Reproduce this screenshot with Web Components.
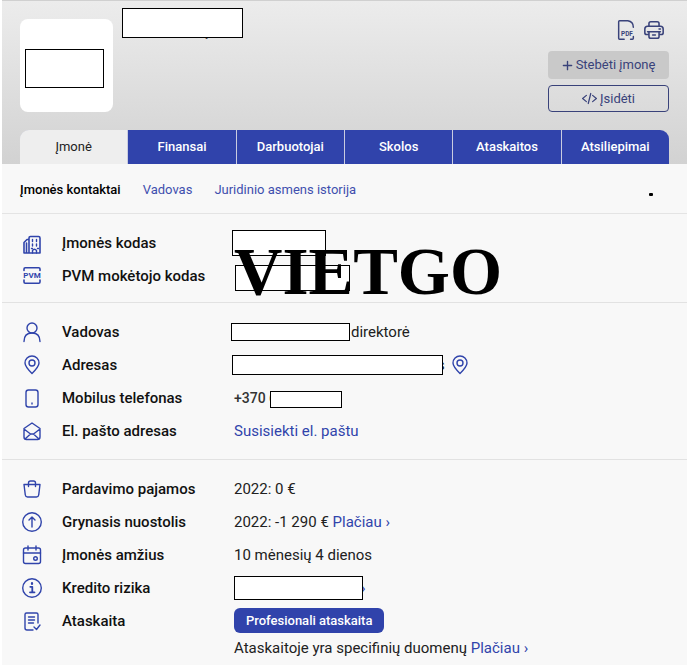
<!DOCTYPE html>
<html lang="lt">
<head>
<meta charset="utf-8">
<meta name="viewport" content="width=device-width, initial-scale=1">
<title>Įmonės kontaktai</title>
<style>
  html { background: #fff; }
  body { margin: 0 13px 0 2px; font-family: Roboto, "Liberation Sans", sans-serif; font-size: 15px; line-height: 20px; color: #212121; }
</style>
</head>
<body>
<company-page></company-page>
<script>
const ICONS = {
  pdf: `<path d="M10 22H5q-1 0-1-1V3q0-1 1-1h9q6 1 6 7M20 19v2q0 1-1 1h-2" stroke-width="1.600"/><text x="13" y="18" font-size="7" font-weight="700" text-anchor="middle" fill="currentColor" stroke="none">PDF</text>`,
  print: `<path d="M6.500 8V5q0-2 2-2h7q2 0 2 2v3M6.500 17H4q-2 0-2-2v-4q0-3 3-3h14q3 0 3 3v4q0 2-2 2h-2.500M5 14h14M6.500 14v5q0 2 2 2h7q2 0 2-2v-5M10.500 17.500h3M17.500 11h1.500" stroke-width="1.700"/>`,
  company: `<path d="M9 22V7q0-1.500 1.500-1.500h8q1.500 0 1.500 1.500v15H4V11.500L7 8.500h2M6.500 12v10" stroke-width="1.600"/><path d="M12.500 8.500v2M16.500 8.500v2M12.500 13v2M16.500 13v2M12.500 22v-2.500q2-2.500 4 0V22M11.500 17.500h1M17.500 17.500h1"/>`,
  vat: `<path d="M4 6.500V5q0-1.200 1.200-1.200h13.600Q20 3.800 20 5v1.500M4 16v2q0 1.200 1.200 1.200h13.600Q20 19.200 20 18v-2" stroke-width="1.600"/><text x="12" y="14" font-size="8" font-weight="700" text-anchor="middle" fill="currentColor" stroke="none">PVM</text>`,
  person: `<circle cx="12" cy="8" r="5"/><path d="M4 21.500q0-8.500 8-8.500t8 8.500"/>`,
  pin: `<path d="M12 20.500C8 16.500 5 13.500 5 10a7 7 0 0 1 14 0C19 13.500 16 16.500 12 20.500z"/><circle cx="12" cy="10" r="3"/>`,
  phone: `<rect x="6" y="4" width="12" height="17" rx="2.500"/><path d="M12 17v1"/>`,
  mail: `<path d="M4 9.500L12 4l8 5.500V18q0 2.500-2.500 2.500h-11Q4 20.500 4 18zM4 10l6.500 5h3L20 10M5 20l5.500-5M19 20l-5.500-5"/>`,
  bag: `<path d="M4 7.500h16l-1.300 10.500q-.3 2-2.300 2H7.600q-2 0-2.300-2zM8.500 9.500V6q0-2 2-2h3q2 0 2 2v3.500"/>`,
  up: `<circle cx="12" cy="12" r="9.300"/><path d="M12 17V7M9 10l3-3 3 3"/>`,
  calendar: `<rect x="3.500" y="5" width="17" height="15.500" rx="2"/><path d="M3.500 10h17M8 3v4M16 3v4"/><circle cx="15.500" cy="15.500" r="1.800"/>`,
  info: `<circle cx="12" cy="12" r="9.300"/><path d="M10.300 10.800h2V16M10 16.300h4.500" stroke-width="1.800"/><path d="M12 7v1" stroke-width="2.200"/>`,
  report: `<path d="M13 21H7q-2 0-2-2V5.500Q5 4 6.500 4h10Q18 4 18 5.500V14M8.500 8h6M8.500 11h6M8.500 14h5M14 18l2.500 2.500L20 16"/>`,
  plus: `<path d="M12 3v18M3 12h18" stroke-width="3"/>`,
  code: `<path d="M7 7l-6 5 6 5M17 7l6 5-6 5M14 4l-4 16" stroke-width="2"/>`
};

function define(name, html, setup) {
  const template = document.createElement('template');
  template.innerHTML = html;
  customElements.define(name, class extends HTMLElement {
    constructor() {
      super();
      this.attachShadow({ mode: 'open' }).append(template.content.cloneNode(true));
    }
    connectedCallback() { if (setup) setup(this, this.shadowRoot); }
  });
}

define('ui-icon', `<style>
  :host { display: inline-flex; flex: none; width: var(--icon-size, 24px); height: var(--icon-size, 24px); color: var(--icon-color, #3044ab); }
  svg { width: 100%; height: 100%; fill: none; stroke: currentColor; stroke-width: 1.400; stroke-linecap: round; stroke-linejoin: round; font-family: Roboto, sans-serif; }
</style><svg viewBox="0 0 24 24" aria-hidden="true"></svg>`,
(el, root) => { root.querySelector('svg').innerHTML = ICONS[el.getAttribute('name')]; });

define('blank-box', `<style>
  :host { display: block; flex: none; box-sizing: border-box; width: var(--w); height: var(--h); background: #fff; border: 1px solid #000; z-index: 1; }
</style>`);

define('company-header', `<style>
  :host { display: block; border-top: 1px solid #d0d0d0; background: linear-gradient(#ececec, #d2d2d2); padding: 0 18px; }
  .top { display: flex; height: 129px; align-items: flex-start; }
  .logo { display: flex; box-sizing: border-box; width: 93px; height: 93px; margin-top: 18px; padding: 30px 5px; background: #fff; border-radius: 8px; }
  .name { display: flex; margin: 7px 0 0 9px; }
  .tail { color: #111; font-size: 22px; line-height: 30px; font-weight: 500; margin-left: -38px; margin-top: 6px; }
  .actions { margin-left: auto; padding-top: 18px; width: 121px; --icon-color: #39427a; }
  .tools { display: flex; justify-content: flex-end; gap: 6px; padding-right: 4px; height: 32px; --icon-size: 22px; }
  button { font: inherit; color: #39427a; cursor: pointer; }
  .tools button { border: 0; padding: 0; background: none; height: 22px; }
  .wide { display: flex; align-items: center; justify-content: center; gap: 3px; box-sizing: border-box; width: 100%; height: 28px; padding: 0; border: 0; border-radius: 4px; background: #c9c9c9; font-size: 13px; --icon-size: 11px; }
  .outline { height: 27px; margin-top: 6px; border: 1px solid #39427a; background: none; --icon-size: 15px; }
  nav { display: grid; grid-template-columns: repeat(6, 1fr); gap: 1px; border-radius: 9px 9px 0 0; overflow: hidden; background: #c9cce0; }
  nav a { height: 34px; line-height: 34px; text-align: center; background: #3043ab; color: #fff; text-decoration: none; font-size: 13px; font-weight: 500; }
  nav a[aria-current] { background: #eee; color: #222; font-weight: 400; }
</style>
<div class="top">
  <div class="logo"><blank-box style="--w:79px;--h:39px"></blank-box></div>
  <div class="name"><blank-box style="--w:121px;--h:30px"></blank-box><span class="tail">,</span></div>
  <div class="actions">
    <div class="tools"><button aria-label="PDF"><ui-icon name="pdf"></ui-icon></button><button aria-label="Spausdinti"><ui-icon name="print"></ui-icon></button></div>
    <button class="wide"><ui-icon name="plus"></ui-icon>Stebėti įmonę</button>
    <button class="wide outline"><ui-icon name="code"></ui-icon>Įsidėti</button>
  </div>
</div>
<nav><a href="#" aria-current="page">Įmonė</a><a href="#">Finansai</a><a href="#">Darbuotojai</a><a href="#">Skolos</a><a href="#">Ataskaitos</a><a href="#">Atsiliepimai</a></nav>`);

define('sub-nav', `<style>
  :host { display: flex; align-items: center; gap: 22px; box-sizing: border-box; height: 50px; padding: 2px 18px 0; border-bottom: 1px solid #e4e4e4; font-size: 13px; }
  a { color: #3f4fae; text-decoration: none; }
  a[aria-current] { color: #000; font-weight: 500; }
  i { width: 4px; height: 3px; margin: 9px 16px 0 auto; border-radius: 1px; background: #000; }
</style><a href="#" aria-current="true">Įmonės kontaktai</a><a href="#">Vadovas</a><a href="#">Juridinio asmens istorija</a><i></i>`);

define('info-section', `<style>
  :host { display: block; position: relative; padding: 12px 18px; border-bottom: 1px solid #e2e2e2; }
  :host([tight]) { padding-bottom: 10px; }
  :host([last]) { border: 0; padding-bottom: 0; }
</style><slot></slot>`);

define('info-row', `<style>
  :host { display: grid; grid-template-columns: 24px 154px 1fr; column-gap: 18px; min-height: 33px; align-items: center; }
  .label { color: #111; font-weight: 500; }
  .value { display: flex; align-items: center; white-space: pre; }
</style><ui-icon></ui-icon><span class="label"></span><div class="value"><slot></slot></div>`,
(el, root) => {
  const icon = root.querySelector('ui-icon');
  icon.setAttribute('name', el.getAttribute('icon'));
  icon.shadowRoot.querySelector('svg').innerHTML = ICONS[el.getAttribute('icon')];
  root.querySelector('.label').textContent = el.getAttribute('label');
});

define('word-mark', `<style>
  :host { position: absolute; left: 232px; top: 20px; z-index: 2; font: 700 67px/74px "Liberation Serif", serif; color: #000; }
</style><slot></slot>`);

define('company-page', `<style>
  :host { display: block; background: #f8f8f8; }
  a { color: #3044ab; text-decoration: none; }
  .behind { margin-left: -6px; }
  .map { margin-left: 3px; }
  .phone { color: #333; font-size: 14px; font-weight: 500; }
  .report { display: flex; align-items: center; height: 25px; padding: 0 12px; border: 0; border-radius: 6px; background: #3043ab; color: #fff; font: inherit; font-size: 13px; font-weight: 500; cursor: pointer; }
  .note { padding: 1px 0 7px 214px; }
</style>
<company-header></company-header>
<sub-nav></sub-nav>
<info-section tight>
  <info-row icon="company" label="Įmonės kodas"><blank-box style="--w:94px;--h:26px;margin-left:-2px"></blank-box></info-row>
  <info-row icon="vat" label="PVM mokėtojo kodas"><blank-box style="--w:115px;--h:26px;margin:4px 0 0 1px"></blank-box></info-row>
  <word-mark>VIETGO</word-mark>
</info-section>
<info-section>
  <info-row icon="person" label="Vadovas"><blank-box style="--w:119px;--h:18px;margin:0 1px 0 -3px"></blank-box>direktorė</info-row>
  <info-row icon="pin" label="Adresas"><blank-box style="--w:211px;--h:20px;margin-left:-2px"></blank-box><span class="behind">s</span><a class="map" href="#" aria-label="Žemėlapis"><ui-icon name="pin" style="vertical-align:middle"></ui-icon></a></info-row>
  <info-row icon="phone" label="Mobilus telefonas"><span class="phone">+370 6</span><blank-box style="--w:72px;--h:17px;margin:3px 0 0 -7px"></blank-box></info-row>
  <info-row icon="mail" label="El. pašto adresas"><a href="#">Susisiekti el. paštu</a></info-row>
</info-section>
<info-section last>
  <info-row icon="bag" label="Pardavimo pajamos">2022: 0 €</info-row>
  <info-row icon="up" label="Grynasis nuostolis">2022: -1 290 € <a href="#">Plačiau ›</a></info-row>
  <info-row icon="calendar" label="Įmonės amžius">10 mėnesių 4 dienos</info-row>
  <info-row icon="info" label="Kredito rizika"><blank-box style="--w:129px;--h:24px"></blank-box><a style="margin-left:-2px" href="#">›</a></info-row>
  <info-row icon="report" label="Ataskaita"><button class="report">Profesionali ataskaita</button></info-row>
  <div class="note">Ataskaitoje yra specifinių duomenų <a href="#">Plačiau ›</a></div>
</info-section>`);
</script>
</body>
</html>
